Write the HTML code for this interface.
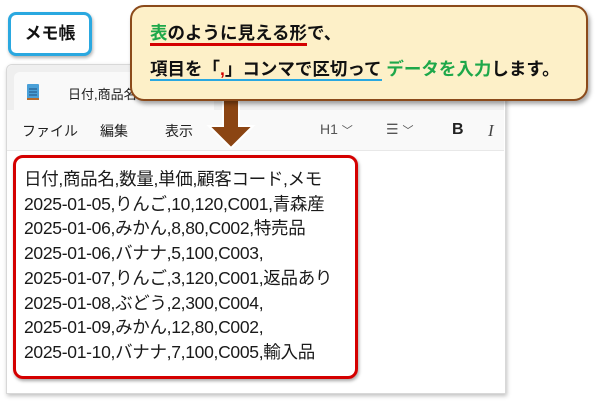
<!DOCTYPE html>
<html><head><meta charset="utf-8"><style>
body{margin:0;width:600px;height:402px;background:#fff;position:relative;overflow:hidden;font-family:"Liberation Sans","Noto Sans CJK JP",sans-serif;}
.abs{position:absolute;}
.win{left:6px;top:64px;width:498px;height:328px;background:#fff;border:1px solid #d8d8d8;box-shadow:1px 2px 4px rgba(0,0,0,.25);border-radius:6px 6px 0 0;}
.tabbar{left:7px;top:65px;width:497px;height:45px;background:#efefef;border-radius:6px 6px 0 0;}
.tab{left:14px;top:72px;width:200px;height:40px;background:#f9f9f9;border-radius:6px 6px 0 0;}
.menu{left:7px;top:110px;width:497px;height:40px;background:#f9f9f9;border-bottom:1px solid #e8e8e8;}
.mt{font-size:14px;color:#222;top:121px;}
.red{left:13px;top:155px;width:339px;height:218px;border:3px solid #d40000;border-radius:10px;box-shadow:1px 2px 3px rgba(0,0,0,.35);}
.txt{left:24px;top:167px;font-size:17.5px;line-height:24.7px;color:#1a1a1a;white-space:pre;letter-spacing:-0.3px;}
.memo{left:8px;top:12px;width:78px;height:38px;border:3px solid #2aa8e0;border-radius:8px;background:#fff;box-shadow:1px 2px 3px rgba(0,0,0,.3);font-weight:bold;font-size:17px;text-align:center;line-height:38px;color:#111;}
.call{left:130px;top:5px;width:454px;height:92px;background:#fdf0c8;border:2px solid #8b4a1a;border-radius:14px;box-shadow:2px 3px 4px rgba(0,0,0,.35);}
.ct{font-weight:bold;font-size:17.5px;color:#111;white-space:nowrap;}
.g{color:#1ea84a;}
</style></head><body>
<div class="abs win"></div>
<div class="abs tabbar"></div>
<div class="abs tab"></div>
<svg class="abs" style="left:26px;top:83px" width="14" height="18"><rect x="1" y="1" width="12" height="15" fill="#4aa0d8" rx="1"/><rect x="1" y="15" width="12" height="2" fill="#b86a2a"/><line x1="3" y1="6" x2="11" y2="6" stroke="#1d4f80"/><line x1="3" y1="9" x2="11" y2="9" stroke="#1d4f80"/><line x1="3" y1="12" x2="11" y2="12" stroke="#1d4f80"/></svg>
<div class="abs" style="left:68px;top:84px;font-size:13px;color:#222">日付,商品名</div>
<div class="abs menu"></div>
<div class="abs mt" style="left:22px">ファイル</div>
<div class="abs mt" style="left:100px">編集</div>
<div class="abs mt" style="left:165px">表示</div>
<div class="abs mt" style="left:320px;color:#555">H1 <span style="font-size:11px">﹀</span></div>
<div class="abs mt" style="left:386px;color:#555">☰ <span style="font-size:11px">﹀</span></div>
<div class="abs mt" style="left:452px;font-weight:bold;font-size:16px">B</div>
<div class="abs mt" style="left:488px;font-style:italic;font-family:'Liberation Serif',serif;font-size:17px;color:#444">I</div>
<div class="abs red"></div>
<div class="abs txt">日付,商品名,数量,単価,顧客コード,メモ
2025-01-05,りんご,10,120,C001,青森産
2025-01-06,みかん,8,80,C002,特売品
2025-01-06,バナナ,5,100,C003,
2025-01-07,りんご,3,120,C001,返品あり
2025-01-08,ぶどう,2,300,C004,
2025-01-09,みかん,12,80,C002,
2025-01-10,バナナ,7,100,C005,輸入品</div>
<div class="abs memo">メモ帳</div>
<svg class="abs" style="left:205px;top:96px" width="52" height="56"><path d="M18 0 H34 V30 H48 L26 52 L4 30 H18 Z" fill="#8b4513" stroke="#fff" stroke-width="2"/></svg>
<div class="abs call"></div>
<div class="abs ct" style="left:150px;top:20px"><span class="g" style="border-bottom:3px solid #d40000">表</span><span style="border-bottom:3px solid #d40000">のように見える形</span>で、</div>
<div class="abs ct" style="left:150px;top:56px"><span style="border-bottom:2px solid #2aa8e0">項目を「<span style="color:#d40000">,</span>」コンマで区切って</span> <span class="g">データを入力</span>します。</div>
</body></html>
